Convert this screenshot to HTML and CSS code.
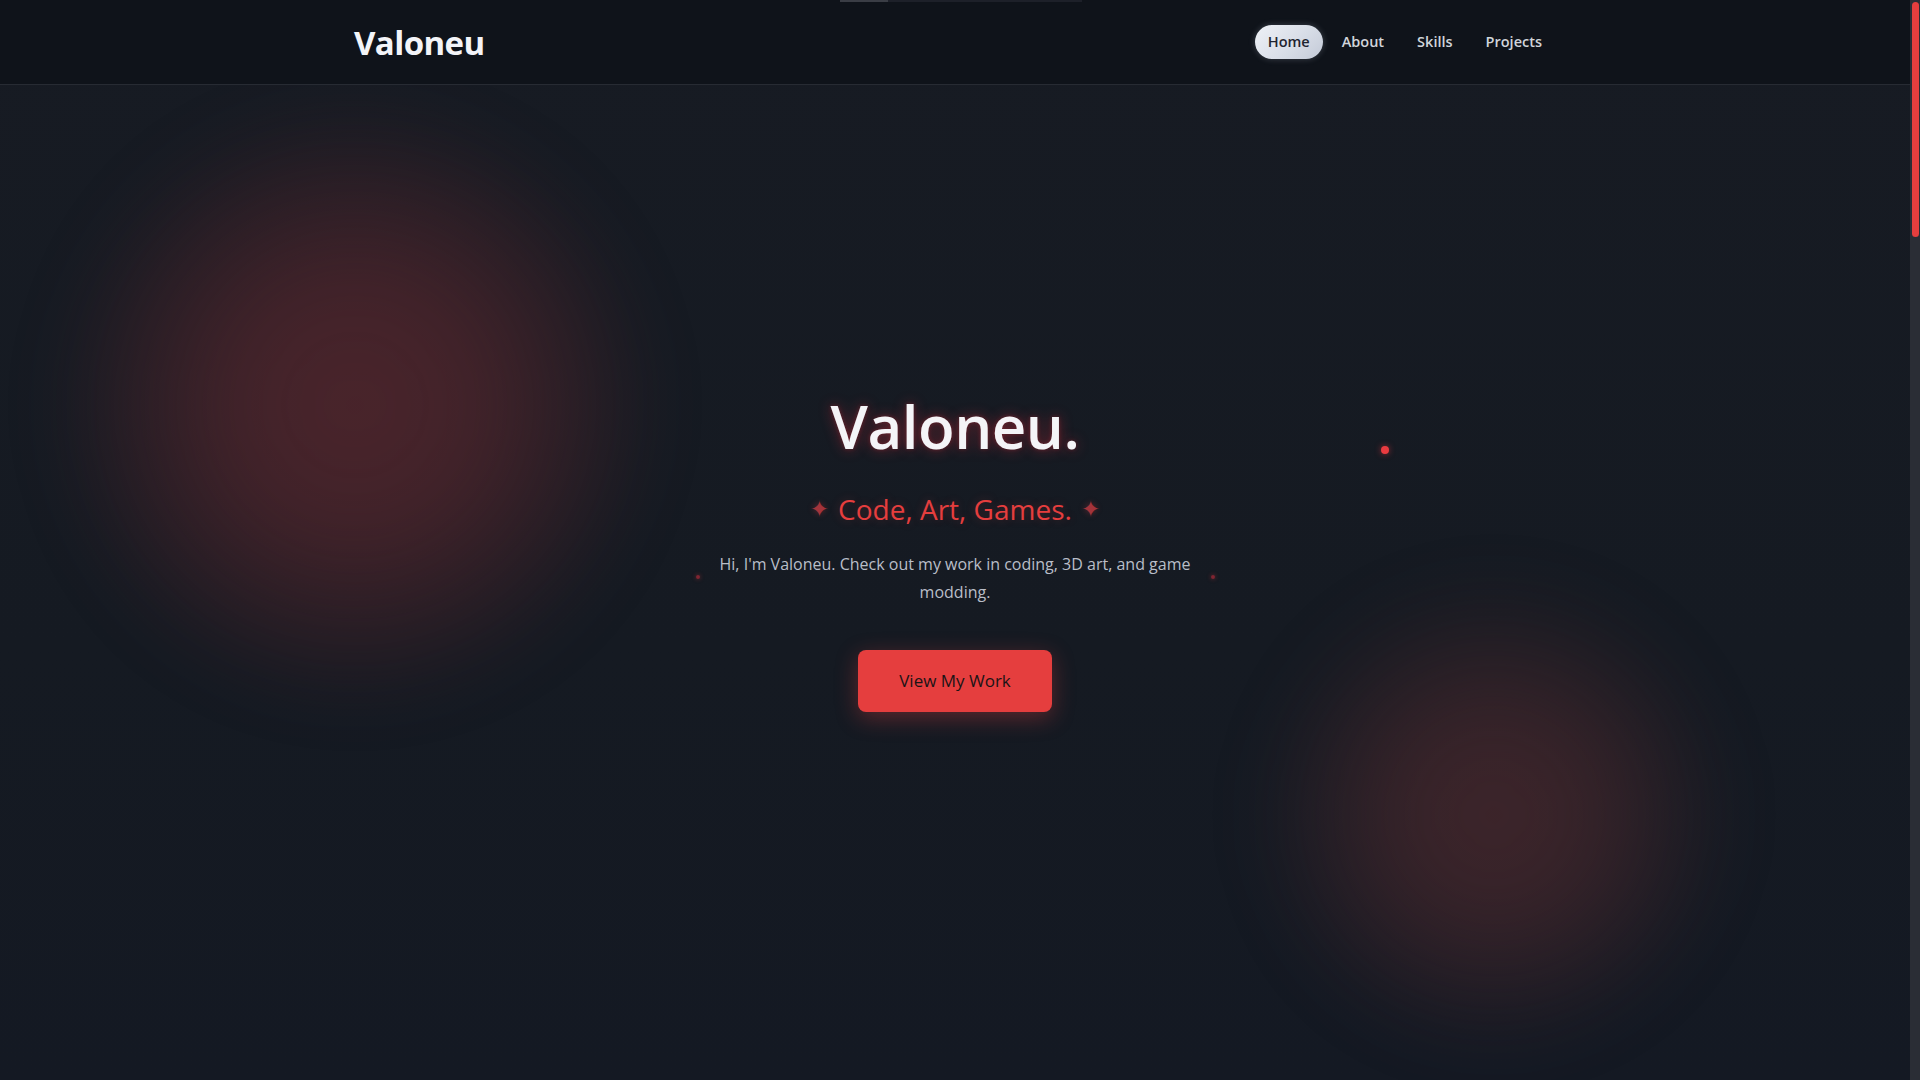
FILE: index.html
```html
<!DOCTYPE html>
<html lang="en">
<head>
<meta charset="utf-8">
<title>Valoneu</title>
<link rel="stylesheet" href="styles.css">
</head>
<body>
<div class="page">
  <header class="nav">
    <div class="nav-progress"><span class="nav-progress-fill"></span></div>
    <div class="nav-inner">
      <a class="logo" href="#home">Valoneu</a>
      <nav class="links">
        <a class="link active" href="#home">Home</a>
        <a class="link" href="#about">About</a>
        <a class="link" href="#skills">Skills</a>
        <a class="link" href="#projects">Projects</a>
      </nav>
    </div>
  </header>

  <main>
    <section class="hero" id="home">
      <div class="blob blob-left"></div>
      <div class="blob blob-right"></div>
      <span class="particle"></span>
      <div class="hero-content">
        <h1 class="title">Valoneu.</h1>
        <p class="subtitle"><span class="spark">✦</span>Code, Art, Games.<span class="spark">✦</span></p>
        <p class="intro">Hi, I'm Valoneu. Check out my work in coding, 3D art, and game modding.</p>
        <a class="cta" href="#projects">View My Work</a>
      </div>
    </section>
  </main>
</div>
<div class="scrollbar" aria-hidden="true"><span class="scrollbar-thumb"></span></div>
</body>
</html>
```

FILE: styles.css
```css
* { box-sizing: border-box; }

html {
  background: #151a22;
  height: 100%;
  overflow: hidden;
}

body {
  margin: 0;
  height: 100%;
  font-family: "Open Sans", "Noto Sans", sans-serif;
  color: #e5e7eb;
}

.page {
  height: 100%;
  margin-right: 10px;
  background: linear-gradient(180deg, #171b23 0%, #151a22 60%, #141923 100%);
  overflow: hidden;
}

a { text-decoration: none; color: inherit; }

/* fake page scrollbar */
.scrollbar {
  position: fixed;
  top: 0;
  right: 0;
  width: 10px;
  height: 100%;
  background: #2a2d35;
}
.scrollbar-thumb {
  position: absolute;
  top: 2px;
  left: 2px;
  width: 7px;
  height: 235px;
  border-radius: 4px;
  background: #e53e3e;
}

/* NAV */
.nav {
  position: relative;
  height: 85px;
  background: #0f131a;
  border-bottom: 1px solid #272b33;
  z-index: 5;
}

.nav-progress {
  position: absolute;
  top: 0;
  left: 840px;
  width: 242px;
  height: 2px;
  background: #1d2029;
}
.nav-progress-fill {
  display: block;
  width: 48px;
  height: 100%;
  background: #3a3d45;
}

.nav-inner {
  max-width: 1202px;
  height: 100%;
  margin: 0 auto;
  display: flex;
  align-items: center;
  justify-content: space-between;
}

.logo {
  font-size: 33px;
  font-weight: 700;
  color: #f3f4f8;
  letter-spacing: -0.6px;
  margin-top: 1px;
}

.links {
  display: flex;
  align-items: center;
  gap: 5px;
}

.link {
  font-size: 14.5px;
  font-weight: 600;
  color: #d1d5db;
  padding: 6px 14px;
  line-height: 22px;
  border-radius: 999px;
}

.link.active {
  padding: 6px 13px;
  background: linear-gradient(135deg, #eef1f6 0%, #d9dee8 55%, #c3cad7 100%);
  color: #1f2430;
  box-shadow: 0 0 6px rgba(200, 210, 230, 0.25);
}

/* HERO */
.hero {
  position: relative;
  min-height: 995px;
  padding-bottom: 62px;
  display: flex;
  align-items: center;
  justify-content: center;
  overflow: hidden;
}

.blob {
  position: absolute;
  border-radius: 50%;
  filter: blur(30px);
  pointer-events: none;
}

.blob-left {
  left: 50px;
  top: 15px;
  width: 610px;
  height: 610px;
  background: radial-gradient(circle closest-side, rgba(115, 44, 50, 0.57) 0%, rgba(115, 44, 50, 0.47) 40%, rgba(115, 44, 50, 0.23) 72%, rgba(115, 44, 50, 0) 100%);
}

.blob-right {
  left: 1254px;
  top: 490px;
  width: 480px;
  height: 480px;
  background: radial-gradient(circle closest-side, rgba(108, 50, 52, 0.48) 0%, rgba(108, 50, 52, 0.38) 40%, rgba(108, 50, 52, 0.18) 72%, rgba(108, 50, 52, 0) 100%);
}

.particle {
  position: absolute;
  left: 1381px;
  top: 361px;
  width: 8px;
  height: 8px;
  border-radius: 50%;
  background: #ea3b40;
  box-shadow: 0 0 6px rgba(234, 59, 64, 0.6);
}

.hero-content {
  position: relative;
  display: flex;
  flex-direction: column;
  align-items: center;
  text-align: center;
}

.title {
  margin: 0;
  font-size: 60px;
  line-height: 70px;
  font-weight: 600;
  color: #f4f4f7;
  letter-spacing: -0.5px;
  text-shadow: 0 0 14px rgba(220, 45, 60, 0.45), 0 0 4px rgba(220, 45, 60, 0.3);
}

.subtitle {
  margin: 29px 0 0;
  font-size: 28px;
  line-height: 39px;
  font-weight: 500;
  color: #e53e3e;
  display: flex;
  align-items: center;
  gap: 9px;
  text-shadow: 0 0 10px rgba(229, 62, 62, 0.25);
}

.spark {
  font-family: "DejaVu Sans", sans-serif;
  font-size: 23px;
  line-height: 39px;
  color: #a3343b;
  text-shadow: 0 0 6px rgba(229, 62, 62, 0.35);
}

.intro {
  position: relative;
  margin: 21px 0 0;
  width: 512px;
  font-size: 16px;
  line-height: 28px;
  color: #b9bec8;
}

.intro::before,
.intro::after {
  content: "";
  position: absolute;
  top: 25px;
  width: 4px;
  height: 4px;
  border-radius: 50%;
  background: rgba(200, 45, 60, 0.6);
  box-shadow: 0 0 4px rgba(229, 62, 62, 0.5);
}
.intro::before { left: -3px; }
.intro::after { right: -4px; }

.cta {
  margin-top: 44px;
  padding: 16px 41px;
  line-height: 30px;
  font-size: 17px;
  font-weight: 500;
  color: #1a1416;
  background: #e53e3e;
  border-radius: 8px;
  box-shadow: 0 6px 22px rgba(229, 62, 62, 0.35);
}
```
